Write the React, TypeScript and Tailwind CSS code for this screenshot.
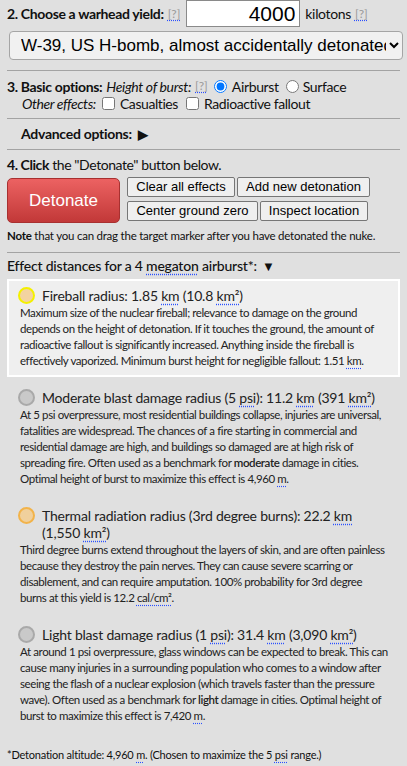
import { useState } from 'react'

const lato = { fontFamily: 'Lato, "Open Sans", sans-serif' }
const arial = { fontFamily: '"Liberation Sans", Arial, sans-serif' }

function Help() {
  return (
    <span className="text-[12px] tracking-normal text-[#9a9a9a] underline decoration-dotted decoration-[#2b50ff] underline-offset-2">
      [?]
    </span>
  )
}

function Abbr({ children }: { children: React.ReactNode }) {
  return <span className="underline decoration-dotted decoration-[#2b50ff] underline-offset-[3px]">{children}</span>
}

function Dot({ kind }: { kind: 'fire' | 'gray' | 'thermal' }) {
  const cls =
    kind === 'fire'
      ? 'bg-[#f3d3a0] border-[#f4f000]'
      : kind === 'thermal'
        ? 'bg-[#f0d09c] border-[#f2b34a]'
        : 'bg-[#c9c9c9] border-[#a9a9a9]'
  return <span className={`h-[17px] w-[17px] shrink-0 rounded-full border-2 ${cls}`} />
}

function Effect({
  kind,
  title,
  highlight,
  className = '',
  children,
}: {
  kind: 'fire' | 'gray' | 'thermal'
  title: React.ReactNode
  highlight?: boolean
  className?: string
  children: React.ReactNode
}) {
  return (
    <div
      className={
        highlight
          ? `border-2 border-white bg-[#efefef] pb-[6px] pl-[9px] pr-[8px] pt-[6px] ${className}`
          : `pl-[11px] pr-[10px] ${className}`
      }
    >
      <div className="flex items-start gap-[7px] text-[14px] leading-[17px] tracking-[-0.015em] text-[#222]">
        <Dot kind={kind} />
        <div className="max-w-[338px]">{title}</div>
      </div>
      <p className="mt-[1px] pl-[2px] text-[11.5px] leading-[16px] tracking-[-0.035em] text-[#222]">{children}</p>
    </div>
  )
}

export default function App() {
  const [burst, setBurst] = useState('air')

  return (
    <div className="min-h-[766px] w-[407px] bg-[#e0e0e0] px-[7px] text-[#111]" style={lato}>
      {/* step 2 */}
      <div className="flex h-[27px] items-center gap-[4px] text-[14px] tracking-[-0.025em]">
        <b className="font-bold">2. Choose a warhead yield:</b>
        <Help />
        <input
          className="ml-[2px] h-[27px] w-[114px] border border-[#8a8a8a] bg-white px-[4px] text-right text-[21px] tracking-normal text-black outline-none"
          style={arial}
          defaultValue="4000"
        />
        <span className="ml-[1px]">kilotons</span>
        <Help />
      </div>
      <div className="mt-[4px] pl-[2px]">
        <select
          className="h-[29px] w-[394px] rounded-[4px] border border-[#a5a5a5] bg-[#f1f1f1] pl-[7px] text-[17px] text-black"
          style={arial}
          defaultValue="w39"
        >
          <option value="w39">W-39, US H-bomb, almost accidentally detonated over North Carolina</option>
        </select>
      </div>
      <hr className="mt-[10px] border-[#a3a3a3]" />

      {/* step 3 */}
      <div className="mt-[6px] flex h-[18px] items-center gap-[4px] text-[14px] tracking-[-0.025em]">
        <b className="font-bold">3. Basic options:</b>
        <i>Height of burst:</i>
        <Help />
        <label className="ml-[2px] flex items-center gap-[5px]">
          <input
            type="radio"
            name="burst"
            className="m-0 h-[13px] w-[13px]"
            checked={burst === 'air'}
            onChange={() => setBurst('air')}
          />
          Airburst
        </label>
        <label className="ml-[3px] flex items-center gap-[4px]">
          <input
            type="radio"
            name="burst"
            className="m-0 h-[13px] w-[13px]"
            checked={burst === 'surface'}
            onChange={() => setBurst('surface')}
          />
          Surface
        </label>
      </div>
      <div className="flex h-[17px] items-center gap-[4px] pl-[15px] text-[14px] tracking-[-0.03em]">
        <i>Other effects:</i>
        <label className="ml-[2px] flex items-center gap-[5px]">
          <input type="checkbox" className="m-0 h-[13px] w-[13px]" />
          Casualties
        </label>
        <label className="ml-[4px] flex items-center gap-[5px]">
          <input type="checkbox" className="m-0 h-[13px] w-[13px]" />
          Radioactive fallout
        </label>
      </div>
      <hr className="mt-[6px] border-[#a3a3a3]" />

      <div className="mt-[6px] h-[18px] pl-[14px] text-[14px] font-bold leading-[18px] tracking-[-0.02em]">
        Advanced options: <span className="ml-[3px] text-[13px]">▶</span>
      </div>
      <hr className="mt-[6px] border-[#a3a3a3]" />

      {/* step 4 */}
      <div className="mt-[6px] h-[18px] text-[14px] leading-[18px] tracking-[-0.03em]">
        <b className="font-bold">4. Click</b> the "Detonate" button below.
      </div>
      <div className="mt-[3px] flex gap-[7px]">
        <button
          className="mt-[1px] h-[45px] w-[113px] rounded-[5px] border border-[#a83030] bg-gradient-to-b from-[#ec6262] to-[#c23838] text-[17px] text-white"
          style={arial}
        >
          Detonate
        </button>
        <div className="flex flex-col gap-[4px] text-[13px] text-black" style={arial}>
          <div className="flex gap-[2px]">
            <button className="h-[20px] w-[108px] rounded-[2px] border border-[#767676] bg-[#efefef] leading-[18px]">
              Clear all effects
            </button>
            <button className="h-[20px] w-[133px] rounded-[2px] border border-[#767676] bg-[#efefef] leading-[18px]">
              Add new detonation
            </button>
          </div>
          <div className="flex gap-[2px]">
            <button className="h-[20px] w-[131px] rounded-[2px] border border-[#767676] bg-[#efefef] leading-[18px]">
              Center ground zero
            </button>
            <button className="h-[20px] w-[108px] rounded-[2px] border border-[#767676] bg-[#efefef] leading-[18px]">
              Inspect location
            </button>
          </div>
        </div>
      </div>
      <div className="mt-[5px] text-[11.5px] leading-[16px] tracking-[-0.02em]">
        <b className="font-bold">Note</b> that you can drag the target marker after you have detonated the nuke.
      </div>
      <hr className="mt-[8px] border-[#a3a3a3]" />

      {/* effects */}
      <div className="mt-[4px] text-[14px] font-medium leading-[18px] tracking-[-0.015em]">
        Effect distances for a 4 <Abbr>megaton</Abbr> airburst*: <span className="ml-[2px] text-[13px]">▼</span>
      </div>

      <Effect
        kind="fire"
        highlight
        className="mt-[4px]"
        title={
          <>
            Fireball radius: 1.85 <Abbr>km</Abbr> (10.8 <Abbr>km²</Abbr>)
          </>
        }
      >
        Maximum size of the nuclear fireball; relevance to damage on the ground depends on the height of detonation. If
        it touches the ground, the amount of radioactive fallout is significantly increased. Anything inside the
        fireball is effectively vaporized. Minimum burst height for negligible fallout: 1.51 <Abbr>km</Abbr>.
      </Effect>

      <Effect
        kind="gray"
        className="mt-[12px]"
        title={
          <>
            Moderate blast damage radius (5 <Abbr>psi</Abbr>): 11.2 <Abbr>km</Abbr> (391 <Abbr>km²</Abbr>)
          </>
        }
      >
        At 5 psi overpressure, most residential buildings collapse, injuries are universal, fatalities are widespread.
        The chances of a fire starting in commercial and residential damage are high, and buildings so damaged are at
        high risk of spreading fire. Often used as a benchmark for <b className="font-semibold">moderate</b> damage in
        cities. Optimal height of burst to maximize this effect is 4,960 <Abbr>m</Abbr>.
      </Effect>

      <Effect
        kind="thermal"
        className="mt-[20px]"
        title={
          <>
            Thermal radiation radius (3rd degree burns): 22.2 <Abbr>km</Abbr> (1,550 <Abbr>km²</Abbr>)
          </>
        }
      >
        Third degree burns extend throughout the layers of skin, and are often painless because they destroy the pain
        nerves. They can cause severe scarring or disablement, and can require amputation. 100% probability for 3rd
        degree burns at this yield is 12.2 <Abbr>cal/cm²</Abbr>.
      </Effect>

      <Effect
        kind="gray"
        className="mt-[20px]"
        title={
          <>
            Light blast damage radius (1 <Abbr>psi</Abbr>): 31.4 <Abbr>km</Abbr> (3,090 <Abbr>km²</Abbr>)
          </>
        }
      >
        At around 1 psi overpressure, glass windows can be expected to break. This can cause many injuries in a
        surrounding population who comes to a window after seeing the flash of a nuclear explosion (which travels
        faster than the pressure wave). Often used as a benchmark for <b className="font-semibold">light</b> damage in
        cities. Optimal height of burst to maximize this effect is 7,420 <Abbr>m</Abbr>.
      </Effect>

      <div className="mt-[24px] pb-[4px] text-[11px] leading-[14px] tracking-[-0.02em]">
        *Detonation altitude: 4,960 <Abbr>m</Abbr>. (Chosen to maximize the 5 <Abbr>psi</Abbr> range.)
      </div>
    </div>
  )
}
